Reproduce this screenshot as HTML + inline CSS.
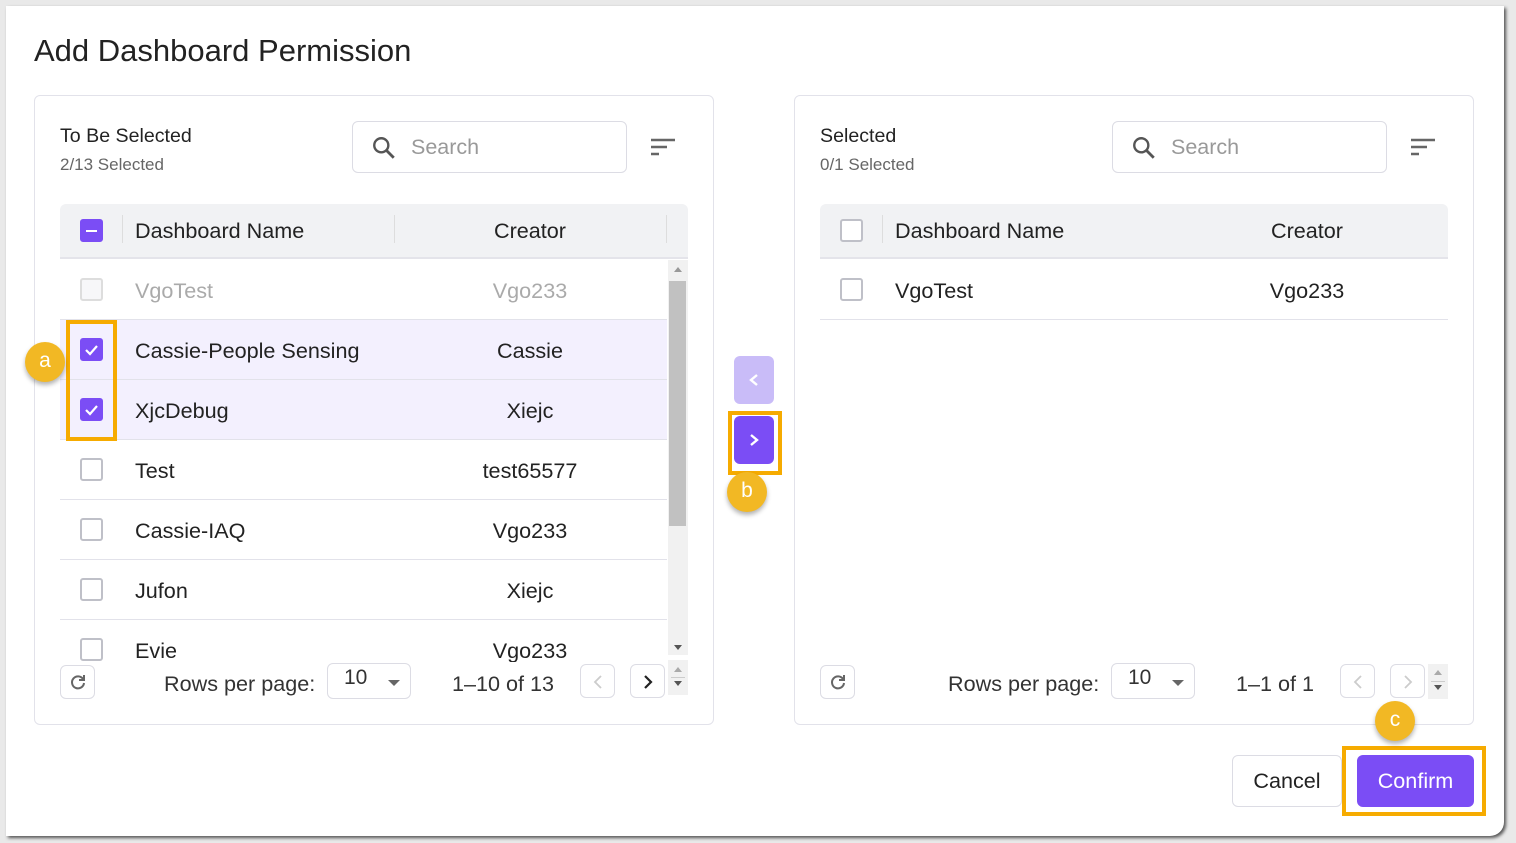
<!DOCTYPE html>
<html><head><style>
*{box-sizing:border-box;margin:0;padding:0}
body{width:1516px;height:843px;background:#e9e9e9;font-family:"Liberation Sans",sans-serif;position:relative;overflow:hidden;color:#222}
.dlg{position:absolute;left:6px;top:6px;width:1498px;height:830px;background:#fff;border-radius:0 0 14px 0;box-shadow:2px 2px 3px #555}
.a{position:absolute}
.panel{position:absolute;top:95px;width:680px;height:630px;border:1px solid #e2e2ea;border-radius:6px;background:#fff}
.t1{font-size:19.6px;color:#222}
.t2{font-size:17px;color:#666}
.search{position:absolute;width:275px;height:52px;border:1px solid #dcdce4;border-radius:6px}
.search span{position:absolute;left:58px;top:13px;font-size:21.5px;color:#999}
.hdr{position:absolute;left:25px;top:108px;width:628px;height:55px;background:#f1f2f4;border-bottom:2px solid #e4e4ea;border-radius:6px 6px 0 0;font-size:21.6px}
.row{position:absolute;left:25px;width:607px;height:60px;border-bottom:1px solid #e2e2ea;font-size:21.6px}
.cb{position:absolute;left:20px;width:23px;height:23px;border:2px solid #bfc0c8;border-radius:3px;background:#fff}
.cbon{background:#7b4df5;border-color:#7b4df5}
.nm{position:absolute;left:75px}
.cr{position:absolute;width:200px;text-align:center}
.sel{background:#f3f0fe}
.btn{position:absolute;border:1px solid #dcdce4;border-radius:6px;background:#fff}
.badge{position:absolute;width:40px;height:40px;border-radius:50%;background:#f2b824;color:#fff;font-size:21px;text-align:center;line-height:38px;box-shadow:0 3px 5px rgba(0,0,0,.3)}
.hl{position:absolute;border:4px solid #f6ab00}
.pg{position:absolute;font-size:21.6px;color:#333}
</style></head><body>
<div class="dlg">
<div class="a" style="left:28px;top:27px;font-size:31px;color:#222">Add Dashboard Permission</div>
</div>

<!-- left panel -->
<div class="panel" style="left:34px">
 <div class="a t1" style="left:25px;top:29px">To Be Selected</div>
 <div class="a t2" style="left:25px;top:59px">2/13 Selected</div>
 <div class="search" style="left:317px;top:25px"><svg class="a" style="left:18px;top:13px" width="26" height="26" viewBox="0 0 24 24"><circle cx="9.5" cy="9.5" r="6.5" fill="none" stroke="#555" stroke-width="2.2"/><path d="M14 14l7 7" stroke="#555" stroke-width="2.6"/></svg><span>Search</span></div>
 <svg class="a" style="left:615px;top:42px" width="26" height="18"><path d="M1 2h24M1 9h16M1 16h8" stroke="#666" stroke-width="2.5"/></svg>
 <div class="hdr">
  <div class="cb cbon" style="top:15px"><div class="a" style="left:4px;top:8.5px;width:11px;height:2.5px;background:#fff"></div></div>
  <div class="a" style="left:62px;top:11px;width:1px;height:28px;background:#ddd"></div>
  <div class="nm" style="top:14px">Dashboard Name</div>
  <div class="a" style="left:334px;top:11px;width:1px;height:28px;background:#ddd"></div>
  <div class="cr" style="left:370px;top:14px">Creator</div>
  <div class="a" style="left:606px;top:11px;width:1px;height:28px;background:#ddd"></div>
 </div>
 <div class="row" style="top:164px;color:#aaa"><div class="cb" style="top:18px;border-color:#ddd;background:#f7f7f9"></div><div class="nm" style="top:18px">VgoTest</div><div class="cr" style="left:370px;top:18px">Vgo233</div></div>
 <div class="row sel" style="top:224px"><div class="cb cbon" style="top:18px"><svg class="a" style="left:2px;top:2px" width="15" height="15"><path d="M2 8l4 4 7-8" stroke="#fff" stroke-width="2.2" fill="none"/></svg></div><div class="nm" style="top:18px">Cassie-People Sensing</div><div class="cr" style="left:370px;top:18px">Cassie</div></div>
 <div class="row sel" style="top:284px"><div class="cb cbon" style="top:18px"><svg class="a" style="left:2px;top:2px" width="15" height="15"><path d="M2 8l4 4 7-8" stroke="#fff" stroke-width="2.2" fill="none"/></svg></div><div class="nm" style="top:18px">XjcDebug</div><div class="cr" style="left:370px;top:18px">Xiejc</div></div>
 <div class="row" style="top:344px"><div class="cb" style="top:18px"></div><div class="nm" style="top:18px">Test</div><div class="cr" style="left:370px;top:18px">test65577</div></div>
 <div class="row" style="top:404px"><div class="cb" style="top:18px"></div><div class="nm" style="top:18px">Cassie-IAQ</div><div class="cr" style="left:370px;top:18px">Vgo233</div></div>
 <div class="row" style="top:464px"><div class="cb" style="top:18px"></div><div class="nm" style="top:18px">Jufon</div><div class="cr" style="left:370px;top:18px">Xiejc</div></div>
 <div class="row" style="top:524px;height:42px;border:none;overflow:hidden"><div class="cb" style="top:18px"></div><div class="nm" style="top:18px">Evie</div><div class="cr" style="left:370px;top:18px">Vgo233</div></div>
 <div class="a" style="left:633px;top:164px;width:20px;height:395px;background:#f1f1f1"><div class="a" style="left:1px;top:21px;width:17px;height:245px;background:#c1c1c1"></div><div class="a" style="left:6px;top:7px;border:4px solid transparent;border-bottom:5px solid #999;border-top:0"></div><div class="a" style="left:6px;top:385px;border:4px solid transparent;border-top:5px solid #555;border-bottom:0"></div></div>
 <div class="a" style="left:633px;top:564px;width:20px;height:35px;background:#f1f1f1"><div class="a" style="left:6px;top:7px;border:4px solid transparent;border-bottom:5px solid #aaa;border-top:0"></div><div class="a" style="left:3px;top:17px;width:14px;height:1px;background:#ccc"></div><div class="a" style="left:6px;top:21px;border:4px solid transparent;border-top:5px solid #555;border-bottom:0"></div></div>
 <div class="btn" style="left:25px;top:569px;width:35px;height:34px"><svg class="a" style="left:8px;top:7px" width="18" height="18" viewBox="0 0 18 18"><path d="M14 6A6 6 0 1 0 15 10" stroke="#666" stroke-width="2" fill="none"/><path d="M15 2v5h-5" stroke="#666" stroke-width="2" fill="none"/></svg></div>
 <div class="pg" style="left:129px;top:575px">Rows per page:</div>
 <div class="btn" style="left:292px;top:567px;width:84px;height:36px"><span class="a" style="left:16px;top:2px;font-size:21px;color:#333">10</span><div class="a" style="left:60px;top:16px;border:6px solid transparent;border-top:6px solid #666;border-bottom:0"></div></div>
 <div class="pg" style="left:417px;top:575px">1–10 of 13</div>
 <div class="btn" style="left:545px;top:568px;width:35px;height:34px"><svg class="a" style="left:11px;top:9px" width="12" height="16"><path d="M9 2L3 8l6 6" stroke="#ccc" stroke-width="1.8" fill="none"/></svg></div>
 <div class="btn" style="left:595px;top:568px;width:35px;height:34px"><svg class="a" style="left:11px;top:9px" width="12" height="16"><path d="M3 2l6 6-6 6" stroke="#222" stroke-width="2.2" fill="none"/></svg></div>
</div>

<!-- right panel -->
<div class="panel" style="left:794px">
 <div class="a t1" style="left:25px;top:29px">Selected</div>
 <div class="a t2" style="left:25px;top:59px">0/1 Selected</div>
 <div class="search" style="left:317px;top:25px"><svg class="a" style="left:18px;top:13px" width="26" height="26" viewBox="0 0 24 24"><circle cx="9.5" cy="9.5" r="6.5" fill="none" stroke="#555" stroke-width="2.2"/><path d="M14 14l7 7" stroke="#555" stroke-width="2.6"/></svg><span>Search</span></div>
 <svg class="a" style="left:615px;top:42px" width="26" height="18"><path d="M1 2h24M1 9h16M1 16h8" stroke="#666" stroke-width="2.5"/></svg>
 <div class="hdr">
  <div class="cb" style="top:15px"></div>
  <div class="a" style="left:62px;top:11px;width:1px;height:28px;background:#ddd"></div>
  <div class="nm" style="top:14px">Dashboard Name</div>
  <div class="cr" style="left:387px;top:14px">Creator</div>
 </div>
 <div class="row" style="top:164px;width:628px"><div class="cb" style="top:18px"></div><div class="nm" style="top:18px">VgoTest</div><div class="cr" style="left:387px;top:18px">Vgo233</div></div>
 <div class="btn" style="left:25px;top:569px;width:35px;height:34px"><svg class="a" style="left:8px;top:7px" width="18" height="18" viewBox="0 0 18 18"><path d="M14 6A6 6 0 1 0 15 10" stroke="#666" stroke-width="2" fill="none"/><path d="M15 2v5h-5" stroke="#666" stroke-width="2" fill="none"/></svg></div>
 <div class="pg" style="left:153px;top:575px">Rows per page:</div>
 <div class="btn" style="left:316px;top:567px;width:84px;height:36px"><span class="a" style="left:16px;top:2px;font-size:21px;color:#333">10</span><div class="a" style="left:60px;top:16px;border:6px solid transparent;border-top:6px solid #666;border-bottom:0"></div></div>
 <div class="pg" style="left:441px;top:575px">1–1 of 1</div>
 <div class="btn" style="left:545px;top:568px;width:35px;height:34px"><svg class="a" style="left:11px;top:9px" width="12" height="16"><path d="M9 2L3 8l6 6" stroke="#ccc" stroke-width="1.8" fill="none"/></svg></div>
 <div class="btn" style="left:595px;top:568px;width:35px;height:34px"><svg class="a" style="left:11px;top:9px" width="12" height="16"><path d="M3 2l6 6-6 6" stroke="#ccc" stroke-width="1.8" fill="none"/></svg></div>
 <div class="a" style="left:633px;top:568px;width:20px;height:35px;background:#f1f1f1"><div class="a" style="left:6px;top:6px;border:4px solid transparent;border-bottom:5px solid #aaa;border-top:0"></div><div class="a" style="left:3px;top:17px;width:14px;height:1px;background:#ccc"></div><div class="a" style="left:6px;top:21px;border:4px solid transparent;border-top:5px solid #555;border-bottom:0"></div></div>
</div>

<!-- transfer buttons -->
<div class="a" style="left:734px;top:356px;width:40px;height:48px;border-radius:6px;background:#c9bcf8"><svg class="a" style="left:14px;top:17px" width="12" height="14"><path d="M9 2L3 7l6 5" stroke="#fff" stroke-width="2.4" fill="none"/></svg></div>
<div class="a" style="left:734px;top:416px;width:40px;height:48px;border-radius:6px;background:#7b4df5"><svg class="a" style="left:14px;top:17px" width="12" height="14"><path d="M3 2l6 5-6 5" stroke="#fff" stroke-width="2.4" fill="none"/></svg></div>
<div class="hl" style="left:728px;top:411px;width:54px;height:64px"></div>
<div class="badge" style="left:727px;top:472px">b</div>

<div class="hl" style="left:66px;top:320px;width:51px;height:121px"></div>
<div class="badge" style="left:25px;top:342px">a</div>

<!-- footer -->
<div class="btn" style="left:1232px;top:755px;width:110px;height:52px;font-size:21.6px;text-align:center;line-height:50px;color:#222">Cancel</div>
<div class="a" style="left:1357px;top:755px;width:117px;height:52px;border-radius:6px;background:#7b4df5;color:#fff;font-size:21.6px;text-align:center;line-height:52px">Confirm</div>
<div class="hl" style="left:1342px;top:746px;width:144px;height:70px"></div>
<div class="badge" style="left:1375px;top:701px">c</div>
</body></html>
